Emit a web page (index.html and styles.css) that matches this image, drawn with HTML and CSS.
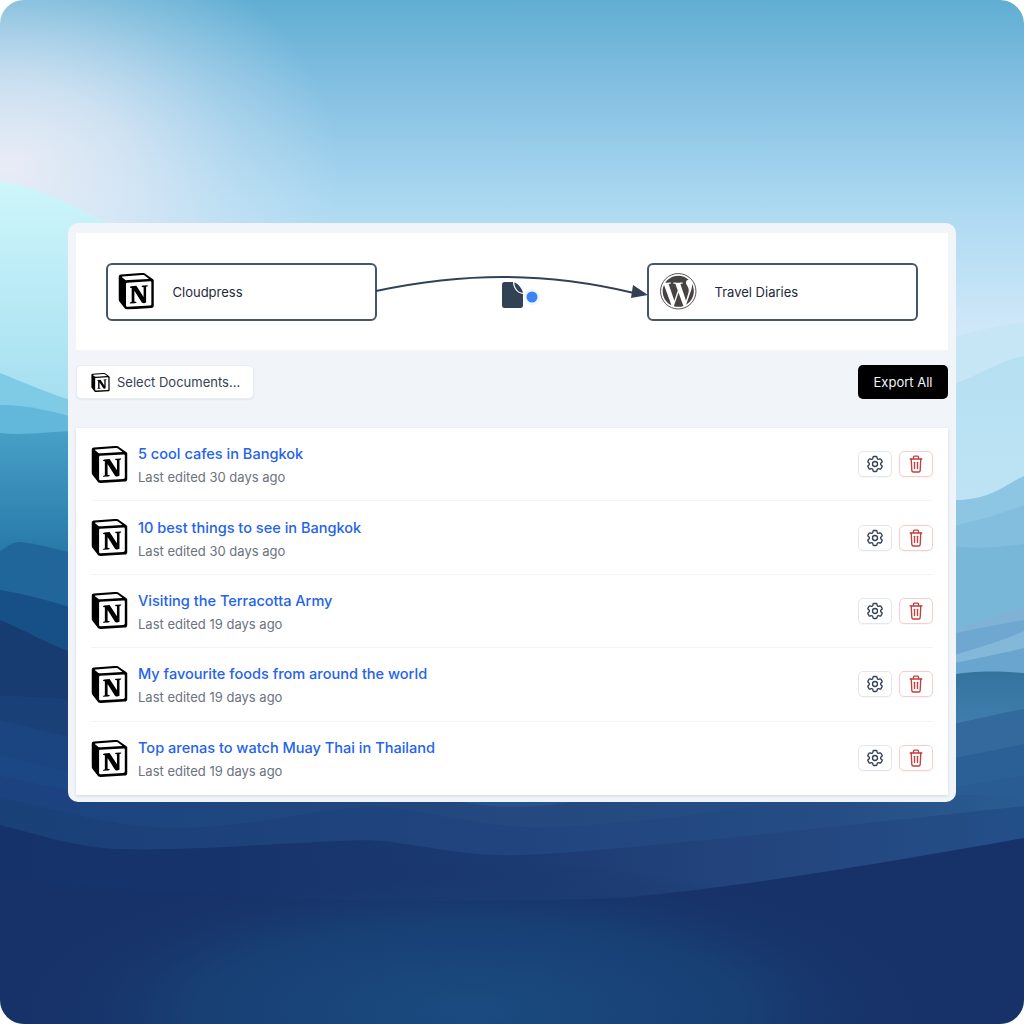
FILE: index.html
```html
<!DOCTYPE html>
<html>
<head>
    <meta charset="UTF-8">
    <link rel="stylesheet" href="styles.css">
</head>
<body>
    <svg class="defs" width="0" height="0">
        <symbol id="notion" viewBox="0 0 24 24">
            <path d="M4.459 4.208c.746.606 1.026.56 2.428.466l13.215-.793c.28 0 .047-.28-.046-.326L17.86 1.968c-.42-.326-.981-.7-2.055-.607L3.01 2.295c-.466.046-.56.28-.374.466zm.793 3.08v13.904c0 .747.373 1.027 1.214.98l14.523-.84c.841-.046.935-.56.935-1.167V6.354c0-.606-.233-.933-.748-.887l-15.177.887c-.56.047-.747.327-.747.934zm14.337.745c.093.42 0 .84-.42.888l-.7.14v10.264c-.608.327-1.168.514-1.635.514-.748 0-.935-.234-1.495-.933l-4.577-7.186v6.952L12.21 19s0 .84-1.168.84l-3.222.186c-.093-.186 0-.653.327-.746l.84-.233V9.854L7.822 9.76c-.094-.42.14-1.026.793-1.073l3.456-.233 4.764 7.279v-6.44l-1.215-.14c-.093-.514.28-.887.747-.933zM1.936 1.035l13.31-.98c1.634-.14 2.055-.047 3.082.7l4.249 2.986c.7.513.934.653.934 1.213v16.378c0 1.026-.373 1.634-1.68 1.726l-15.458.934c-.98.047-1.448-.093-1.962-.747l-3.129-4.06c-.56-.747-.793-1.306-.793-1.96V2.667c0-.839.374-1.54 1.447-1.632z"/>
        </symbol>
        <symbol id="gear" viewBox="0 0 24 24">
            <path d="M9.594 3.94c.09-.542.56-.94 1.11-.94h2.593c.55 0 1.02.398 1.11.94l.213 1.281c.063.374.313.686.645.87.074.04.147.083.22.127.324.196.72.257 1.075.124l1.217-.456a1.125 1.125 0 011.37.49l1.296 2.247a1.125 1.125 0 01-.26 1.431l-1.003.827c-.293.24-.438.613-.431.992a6.759 6.759 0 010 .255c-.007.378.138.75.43.99l1.005.828c.424.35.534.954.26 1.43l-1.298 2.247a1.125 1.125 0 01-1.369.491l-1.217-.456c-.355-.133-.75-.072-1.076.124a6.57 6.57 0 01-.22.128c-.331.183-.581.495-.644.869l-.213 1.28c-.09.543-.56.941-1.11.941h-2.594c-.55 0-1.02-.398-1.11-.94l-.213-1.281c-.062-.374-.312-.686-.644-.87a6.52 6.52 0 01-.22-.127c-.325-.196-.72-.257-1.076-.124l-1.217.456a1.125 1.125 0 01-1.369-.49l-1.297-2.247a1.125 1.125 0 01.26-1.431l1.004-.827c.292-.24.437-.613.43-.992a6.932 6.932 0 010-.255c.007-.378-.138-.75-.43-.99l-1.004-.828a1.125 1.125 0 01-.26-1.43l1.297-2.247a1.125 1.125 0 011.37-.491l1.216.456c.356.133.751.072 1.076-.124.072-.044.146-.087.22-.128.332-.183.582-.495.644-.869l.214-1.281z"/>
            <path d="M15 12a3 3 0 11-6 0 3 3 0 016 0z"/>
        </symbol>
        <symbol id="trash" viewBox="0 0 24 24">
            <path d="M5 6h14"/>
            <path d="M9 5.500V3.600a1 1 0 0 1 1-1h4a1 1 0 0 1 1 1v1.900"/>
            <path d="M6.300 6l.700 14a1.800 1.800 0 0 0 1.800 1.600h6.400a1.800 1.800 0 0 0 1.800-1.600l.700-14"/>
            <path d="M10.200 10v7.500"/>
            <path d="M13.800 10v7.500"/>
        </symbol>
    </svg>

    <div class="scene">
        <svg class="waves" viewBox="0 0 1024 1024" preserveAspectRatio="none">
            <defs>
                <linearGradient id="left-top" gradientUnits="userSpaceOnUse" x1="0" y1="181" x2="0" y2="400">
                    <stop offset="0" stop-color="#cef6fb"/><stop offset="1" stop-color="#a6dff0"/>
                </linearGradient>
                <linearGradient id="left-mid" gradientUnits="userSpaceOnUse" x1="0" y1="433" x2="0" y2="555">
                    <stop offset="0" stop-color="#479fc7"/><stop offset="1" stop-color="#2779a8"/>
                </linearGradient>
                <linearGradient id="right-top" gradientUnits="userSpaceOnUse" x1="0" y1="356" x2="0" y2="500">
                    <stop offset="0" stop-color="#b5e0f2"/><stop offset="1" stop-color="#bde3f4"/>
                </linearGradient>
                <linearGradient id="right-low" gradientUnits="userSpaceOnUse" x1="0" y1="672" x2="0" y2="724">
                    <stop offset="0" stop-color="#35739f"/><stop offset="1" stop-color="#3f7dad"/>
                </linearGradient>
                <linearGradient id="band-top" gradientUnits="userSpaceOnUse" x1="0" y1="0" x2="1024" y2="0">
                    <stop offset="0" stop-color="#1a4580"/><stop offset="0.5" stop-color="#24487f"/><stop offset="1" stop-color="#25528c"/>
                </linearGradient>
                <linearGradient id="band" gradientUnits="userSpaceOnUse" x1="0" y1="0" x2="1024" y2="0">
                    <stop offset="0" stop-color="#1a4078"/><stop offset="0.5" stop-color="#21447e"/><stop offset="0.8" stop-color="#254c84"/><stop offset="1" stop-color="#295c92"/>
                </linearGradient>
                <linearGradient id="band-low" gradientUnits="userSpaceOnUse" x1="0" y1="0" x2="1024" y2="0">
                    <stop offset="0" stop-color="#15326a"/><stop offset="0.2" stop-color="#16336b"/><stop offset="0.5" stop-color="#1c3a72"/><stop offset="0.78" stop-color="#24467f"/><stop offset="1" stop-color="#234f88"/>
                </linearGradient>
                <radialGradient id="deep" gradientUnits="userSpaceOnUse" cx="0" cy="0" r="1" gradientTransform="translate(470 1010) scale(460 150)">
                    <stop offset="0" stop-color="#1a4b80"/><stop offset="0.6" stop-color="#184378" stop-opacity="0.8"/><stop offset="1" stop-color="#173269" stop-opacity="0"/>
                </radialGradient>
            </defs>

            <!-- left of the panel -->
            <path fill="url(#left-top)" d="M0 181C40 188 75 205 112 226V420H0z"/>
            <path fill="#7fcbe6" d="M0 373C25 383 50 394 80 403V440H0z"/>
            <path fill="#62b8da" d="M0 405C30 405 55 412 80 419V440H0z"/>
            <path fill="url(#left-mid)" d="M0 433C25 436 50 431 80 431V600H0z"/>
            <path fill="#20669a" d="M0 551C8 546 12 542 20 542C35 543 60 550 80 555V610H0z"/>
            <path fill="#174f87" d="M0 590C25 594 50 601 80 610V660H0z"/>
            <path fill="#163c72" d="M0 620C25 630 50 646 80 655V720H0z"/>
            <path fill="#1a4078" d="M0 696C25 696 50 698 80 700V740H0z"/>
            <path fill="#1a4580" d="M0 720L80 740V780H0z"/>
            <path fill="#1b4884" d="M0 755L80 775V800H0z"/>
            <path fill="#1c4380" d="M0 776L80 793V830H0z"/>

            <!-- right of the panel -->
            <path fill="#c6e6f6" d="M944 339C970 333 1000 324 1024 322V400H944z"/>
            <path fill="url(#right-top)" d="M944 388C975 378 1000 360 1024 356V510H944z"/>
            <path fill="#8cc6e3" d="M944 500C990 502 1000 487 1024 476V530H944z"/>
            <path fill="#83bedf" d="M944 528C970 523 1000 514 1024 505V560H944z"/>
            <path fill="#79b7d8" d="M944 545C975 550 1000 547 1024 544V640H944z"/>
            <path fill="#7fb2d5" d="M944 634C970 625 1000 614 1024 608V640H944z"/>
            <path fill="#6ea7d0" d="M944 636C970 630 1000 624 1024 620V670H944z"/>
            <path fill="#84b8d9" d="M944 658C970 650 1000 642 1024 631V670H944z"/>
            <path fill="#69a5cf" d="M944 665C970 660 1000 654 1024 648V690H944z"/>
            <path fill="url(#right-low)" d="M944 676C975 670 1000 671 1024 673V740H944z"/>
            <path fill="#33699c" d="M944 726C970 721 1000 713 1024 709V770H944z"/>
            <path fill="#2b6097" d="M944 760C970 755 1000 749 1024 744V800H944z"/>
            <path fill="#295c92" d="M944 788C970 785 1000 779 1024 776V830H944z"/>

            <!-- bottom, full width -->
            <path fill="url(#band-top)" d="M80 790H808V840H80z"/>
            <path fill="#26538d" d="M440 795C480 811 540 811 610 795z"/>
            <path fill="url(#band)" d="M0 797C60 810 125 830 187 828C230 826 270 820 300 815C340 808 370 806 392 808C440 814 500 830 554 827C640 822 720 814 808 795H1024V880H0z"/>
            <path fill="url(#band-low)" d="M0 825C40 835 80 848 117 849C180 851 250 845 300 843C335 841 365 839 383 841C420 845 470 857 520 855C620 851 800 830 1024 806V905H0z"/>
            <path fill="#173269" d="M1024 838C900 860 760 885 620 898C420 905 200 900 0 880V1024H1024z"/>
            <path fill="url(#deep)" d="M0 860H1024V1024H0z"/>
        </svg>

        <div class="panel">
            <div class="flow">
                <div class="node">
                    <svg class="node-icon"><use href="#notion"/></svg>
                    <span>Cloudpress</span>
                </div>
                <svg class="link" viewBox="0 0 271 58">
                    <path class="link-line" d="M0 28C90 9 170 9 258 30"/>
                    <path class="link-head" d="M272 32L257 22L255 35z"/>
                    <path class="link-doc" d="M128.500 19h8.500c0 6 4 11.500 10 12v11.500c0 1.500-1 2.500-2.500 2.500h-16c-1.500 0-2.500-1-2.500-2.500v-21c0-1.500 1-2.500 2.500-2.500z"/>
                    <path class="link-doc" d="M138.300 19.200C142 20.500 145.800 25 147 29.800C142 29.500 138.500 25 138.300 19.200z"/>
                    <circle class="link-halo" cx="156" cy="34" r="8"/>
                    <circle class="link-dot" cx="156" cy="34" r="5.500"/>
                </svg>
                <div class="node node-wp">
                    <svg class="node-icon" viewBox="0 0 24 24">
                        <circle class="wp-ring" cx="12" cy="12" r="11.650"/>
                        <path class="wp-mark" d="M21.469 6.825c.84 1.537 1.318 3.3 1.318 5.175 0 3.979-2.156 7.456-5.363 9.325l3.295-9.527c.615-1.54.82-2.771.82-3.864 0-.405-.026-.78-.07-1.11m-7.981.105c.647-.03 1.232-.105 1.232-.105.582-.075.514-.93-.067-.899 0 0-1.755.135-2.88.135-1.064 0-2.85-.15-2.85-.15-.585-.03-.661.855-.075.885 0 0 .54.061 1.125.09l1.68 4.605-2.37 7.08L5.354 6.9c.649-.03 1.234-.1 1.234-.1.585-.075.516-.93-.065-.896 0 0-1.746.138-2.874.138-.2 0-.438-.008-.69-.015C4.911 3.15 8.235 1.215 12 1.215c2.809 0 5.365 1.072 7.286 2.833-.046-.003-.091-.009-.141-.009-1.06 0-1.812.923-1.812 1.914 0 .89.513 1.643 1.06 2.531.411.72.89 1.643.89 2.977 0 .915-.354 1.994-.821 3.479l-1.075 3.585-3.9-11.61.001.014zM12 22.784c-1.059 0-2.081-.153-3.048-.437l3.237-9.406 3.315 9.087c.024.053.05.101.078.149-1.12.393-2.325.609-3.582.609M1.211 12c0-1.564.336-3.05.935-4.39L7.29 21.709C3.694 19.96 1.212 16.271 1.211 12"/>
                    </svg>
                    <span>Travel Diaries</span>
                </div>
            </div>

            <div class="toolbar">
                <button class="btn-select"><svg class="btn-icon"><use href="#notion"/></svg>Select Documents...</button>
                <button class="btn-export">Export All</button>
            </div>

            <div class="doc-list">
                <div class="doc-row">
                    <svg class="doc-icon"><use href="#notion"/></svg>
                    <div class="doc-text">
                        <a class="doc-title">5 cool cafes in Bangkok</a>
                        <span class="doc-meta">Last edited 30 days ago</span>
                    </div>
                    <button class="btn-tool"><svg class="tool-icon"><use href="#gear"/></svg></button>
                    <button class="btn-tool danger"><svg class="tool-icon"><use href="#trash"/></svg></button>
                </div>
                <div class="doc-row">
                    <svg class="doc-icon"><use href="#notion"/></svg>
                    <div class="doc-text">
                        <a class="doc-title">10 best things to see in Bangkok</a>
                        <span class="doc-meta">Last edited 30 days ago</span>
                    </div>
                    <button class="btn-tool"><svg class="tool-icon"><use href="#gear"/></svg></button>
                    <button class="btn-tool danger"><svg class="tool-icon"><use href="#trash"/></svg></button>
                </div>
                <div class="doc-row">
                    <svg class="doc-icon"><use href="#notion"/></svg>
                    <div class="doc-text">
                        <a class="doc-title">Visiting the Terracotta Army</a>
                        <span class="doc-meta">Last edited 19 days ago</span>
                    </div>
                    <button class="btn-tool"><svg class="tool-icon"><use href="#gear"/></svg></button>
                    <button class="btn-tool danger"><svg class="tool-icon"><use href="#trash"/></svg></button>
                </div>
                <div class="doc-row">
                    <svg class="doc-icon"><use href="#notion"/></svg>
                    <div class="doc-text">
                        <a class="doc-title">My favourite foods from around the world</a>
                        <span class="doc-meta">Last edited 19 days ago</span>
                    </div>
                    <button class="btn-tool"><svg class="tool-icon"><use href="#gear"/></svg></button>
                    <button class="btn-tool danger"><svg class="tool-icon"><use href="#trash"/></svg></button>
                </div>
                <div class="doc-row">
                    <svg class="doc-icon"><use href="#notion"/></svg>
                    <div class="doc-text">
                        <a class="doc-title">Top arenas to watch Muay Thai in Thailand</a>
                        <span class="doc-meta">Last edited 19 days ago</span>
                    </div>
                    <button class="btn-tool"><svg class="tool-icon"><use href="#gear"/></svg></button>
                    <button class="btn-tool danger"><svg class="tool-icon"><use href="#trash"/></svg></button>
                </div>
            </div>
        </div>
    </div>
</body>
</html>
```

FILE: styles.css
```css
* {
    box-sizing: border-box;
}

body {
    margin: 0;
    background-color: #fff;
    font-family: Inter, "Liberation Sans", sans-serif;
}

.defs {
    position: absolute;
}

.scene {
    position: relative;
    width: 1024px;
    height: 1024px;
    padding: 223px 68px 0;
    border-radius: 24px;
    overflow: hidden;
    background:
        radial-gradient(ellipse 330px 240px at 10px 165px, rgba(236, 237, 247, 0.95) 0%, rgba(233, 237, 247, 0.7) 35%, rgba(225, 236, 247, 0.3) 70%, rgba(225, 236, 247, 0) 100%),
        linear-gradient(180deg, #61aed3 0%, #84c0e2 90px, #aad8f1 200px, #cfe8f8 330px);
}

.waves {
    position: absolute;
    top: 0;
    left: 0;
    width: 1024px;
    height: 1024px;
}

.panel {
    position: relative;
    height: 579px;
    padding: 10px 8px 7px;
    border-radius: 10px;
    background-color: #f1f5f9;
}

.flow {
    display: flex;
    align-items: center;
    height: 117px;
    padding: 0 30px;
    background-color: #fff;
}

.node {
    display: flex;
    align-items: center;
    gap: 18px;
    width: 271px;
    height: 58px;
    padding: 0 10px;
    border: 2px solid #475569;
    border-radius: 6px;
    font-size: 13px;
    color: #1e293b;
}

.node-wp {
    padding-left: 11px;
}

.node-icon {
    width: 36.500px;
    height: 36.500px;
    flex: none;
}

.wp-ring {
    fill: none;
    stroke: #464342;
    stroke-width: 0.6;
}

.wp-mark {
    fill: #464342;
    transform: scale(0.95);
    transform-origin: 12px 12px;
}

.link {
    width: 271px;
    height: 58px;
    flex: none;
    margin-left: -1px;
    overflow: visible;
}

.link-line {
    fill: none;
    stroke: #334155;
    stroke-width: 2;
}

.link-head,
.link-doc {
    fill: #334155;
}

.link-halo {
    fill: #eff6ff;
}

.link-dot {
    fill: #3b82f6;
}

.toolbar {
    display: flex;
    justify-content: space-between;
    margin-top: 15px;
}

.btn-select {
    display: flex;
    align-items: center;
    gap: 7px;
    width: 178px;
    height: 34px;
    padding: 0 0 0 14px;
    border: 1px solid #e8edf3;
    border-radius: 5px;
    background-color: #fff;
    box-shadow: 0 1px 2px rgba(0, 0, 0, 0.06);
    font-family: inherit;
    font-size: 13px;
    white-space: nowrap;
    color: #374151;
}

.btn-icon {
    width: 19px;
    height: 19px;
}

.btn-export {
    width: 90px;
    height: 34px;
    border: 0;
    border-radius: 5px;
    background-color: #000;
    font-family: inherit;
    font-size: 13px;
    color: #f1f5f9;
}

.doc-list {
    height: 367px;
    margin-top: 29px;
    padding: 0 15px;
    background-color: #fff;
    box-shadow: 0 1px 3px rgba(0, 0, 0, 0.12);
}

.doc-row {
    display: flex;
    align-items: center;
    height: 73.400px;
    border-bottom: 1px solid #f1f5f9;
}

.doc-row:last-child {
    border-bottom: 0;
}

.doc-icon {
    width: 37px;
    height: 37px;
    flex: none;
}

.doc-text {
    flex: 1;
    display: flex;
    flex-direction: column;
    gap: 4px;
    margin-left: 10px;
    padding-top: 2px;
}

.doc-title {
    font-size: 14.550px;
    font-weight: 500;
    line-height: 20px;
    color: #2563eb;
}

.doc-meta {
    font-size: 13px;
    line-height: 18px;
    color: #6b7280;
}

.btn-tool {
    display: flex;
    align-items: center;
    justify-content: center;
    width: 34px;
    height: 26px;
    margin-left: 7px;
    padding: 0;
    border: 1px solid #e2e8f0;
    border-radius: 5px;
    background-color: #fff;
    box-shadow: 0 1px 1px rgba(0, 0, 0, 0.03);
    color: #334155;
}

.btn-tool.danger {
    border-color: #fecaca;
    color: #c53d3d;
}

.tool-icon {
    width: 20px;
    height: 20px;
    fill: none;
    stroke: currentColor;
    stroke-width: 1.600;
    stroke-linecap: round;
    stroke-linejoin: round;
}
```
